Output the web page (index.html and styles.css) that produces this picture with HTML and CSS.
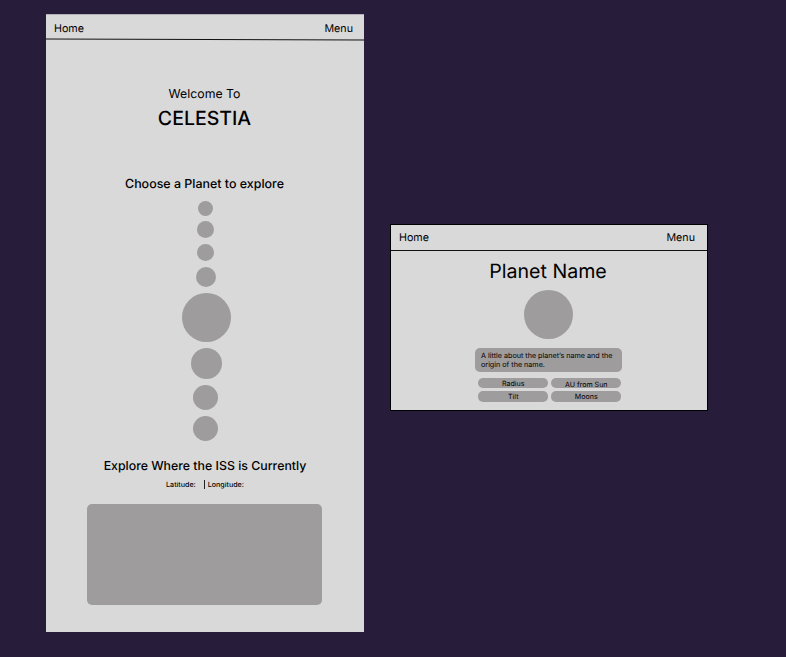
FILE: index.html
```html
<!DOCTYPE html>
<html lang="en">
<head>
<meta charset="utf-8">
<title>Celestia wireframes</title>
<link rel="stylesheet" href="styles.css">
</head>
<body>
<main class="board">
  <section class="frame home">
    <nav class="nav"><span>Home</span><span>Menu</span></nav>
    <svg class="rule" viewBox="0 0 318 3"><line x1="0" y1="1" x2="318" y2="2" stroke="#111" stroke-width="1"/></svg>
    <p class="welcome">Welcome To</p>
    <h1 class="brand">CELESTIA</h1>
    <h2 class="heading choose">Choose a Planet to explore</h2>
    <div class="planets">
      <i class="planet p1"></i>
      <i class="planet p2"></i>
      <i class="planet p3"></i>
      <i class="planet p4"></i>
      <i class="planet p5"></i>
      <i class="planet p6"></i>
      <i class="planet p7"></i>
      <i class="planet p8"></i>
    </div>
    <h2 class="heading iss">Explore Where the ISS is Currently</h2>
    <p class="coords"><span>Latitude:</span><span class="bar"></span><span>Longitude:</span></p>
    <div class="map"></div>
  </section>
  <section class="frame detail">
    <nav class="nav"><span>Home</span><span>Menu</span></nav>
    <h1 class="name">Planet Name</h1>
    <i class="planet portrait"></i>
    <p class="about">A little about the planet’s name and the<br>origin of the name.</p>
    <div class="facts">
      <span class="fact">Radius</span>
      <span class="fact low">AU from Sun</span>
      <span class="fact">Tilt</span>
      <span class="fact">Moons</span>
    </div>
  </section>
</main>
</body>
</html>
```
FILE: styles.css
```css
* { box-sizing: border-box; }
body {
  margin: 0;
  background: #271c3a;
  color: #000;
  font-family: Inter, sans-serif;
  text-rendering: geometricPrecision;
}
h1, h2, p { margin: 0; white-space: nowrap; }
.board {
  display: flex;
  align-items: flex-start;
  gap: 26px;
  height: 657px;
  padding: 14px 0 0 46px;
}
.frame {
  display: flex;
  flex-direction: column;
  align-items: center;
  width: 318px;
  background: #d9d9d9;
}
.home { height: 618px; padding-right: 1px; border-top: 1px solid #b5afb9; }
.nav {
  display: flex;
  justify-content: space-between;
  align-self: stretch;
  font-size: 10.7px;
  line-height: 14px;
}
.home .nav { height: 23px; padding: 7px 10px 0 8px; }
.rule { display: block; align-self: flex-start; flex: none; width: 318px; height: 3px; }
.welcome { margin-top: 45px; font-size: 12.3px; line-height: 16px; }
.brand { margin-top: 4px; font-size: 19.5px; line-height: 24px; font-weight: 500; }
.heading { font-size: 12.35px; line-height: 16px; font-weight: 500; }
.choose { margin-top: 47px; font-size: 12.45px; }
.planets {
  display: flex;
  flex-direction: column;
  align-items: center;
  margin: 8px 0 0 3px;
}
.planet { display: block; border-radius: 50%; background: #9e9c9d; }
.p1 { width: 15px; height: 15px; margin-right: 1px; }
.p2 { width: 17px; height: 17px; margin: 5px 1px 0 0; }
.p3 { width: 17px; height: 17px; margin: 6px 1px 0 0; }
.p4 { width: 20px; height: 20px; margin: 5.5px 1px 0 0; }
.p5 { width: 49px; height: 49px; margin-top: 6px; }
.p6 { width: 31px; height: 31px; margin-top: 6.5px; }
.p7 { width: 25px; height: 25px; margin: 6px 0.5px 0 0; }
.p8 { width: 25px; height: 25px; margin: 6px 0.5px 0 0; }
.iss { margin-top: 17px; margin-left: 1px; }
.coords {
  display: flex;
  align-items: center;
  margin: 6px 0 0 1px;
  font-size: 7.1px;
  line-height: 9px;
  font-weight: 500;
}
.bar { width: 1px; height: 9px; margin: 0 3px 0 8px; background: #222; }
.map { width: 235px; height: 101px; margin-top: 15px; border-radius: 5px; background: #9e9c9d; }
.detail { height: 187px; margin-top: 210px; border: 1px solid #000; padding-right: 2px; }
.detail .nav { width: 316px; align-self: flex-start; flex: none; height: 26px; padding: 6px 12px 0 8px; border-bottom: 1px solid #111; }
.name { margin-top: 8px; font-size: 19.6px; line-height: 24px; font-weight: 400; }
.portrait { width: 49px; height: 49px; margin-top: 7px; }
.about {
  width: 147px;
  height: 24px;
  margin-top: 8.5px;
  padding: 3px 0 0 6.5px;
  border-radius: 5px;
  background: #9e9c9d;
  font-size: 7.2px;
  line-height: 9px;
}
.facts {
  display: grid;
  grid-template-columns: 70px 70px;
  gap: 3px;
  margin: 6px 0 0 3.5px;
}
.fact {
  height: 10.5px;
  border-radius: 5px;
  background: #9e9c9d;
  font-size: 7.1px;
  line-height: 11px;
  text-align: center;
}
.low { padding-top: 1px; }
```
